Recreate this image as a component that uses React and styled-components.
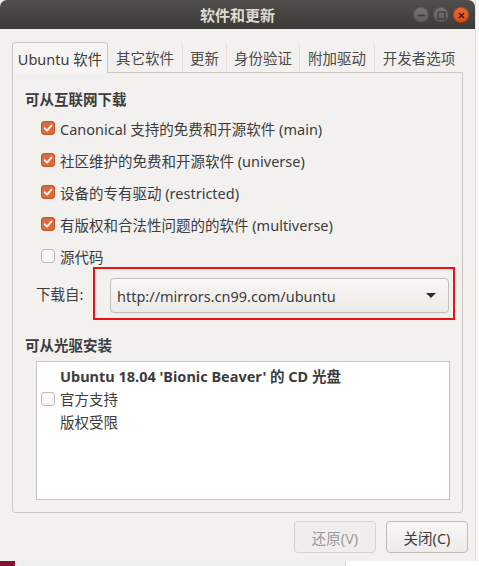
import React from 'react'
import styled, { createGlobalStyle } from 'styled-components'

const GlobalStyle = createGlobalStyle`
  html, body { margin: 0; padding: 0; }
  body {
    width: 479px;
    height: 566px;
    overflow: hidden;
    background: #f4f4f4;
    font-family: "Noto Sans", "Noto Sans CJK SC", sans-serif;
  }
`

const FONT = `"Noto Sans", "Noto Sans CJK SC", sans-serif`

const Screen = styled.div`
  width: 479px;
  height: 566px;
  display: flex;
  flex-direction: column;
`

const TopRow = styled.div`
  display: flex;
  height: 561px;
`

const Window = styled.div`
  width: 475px;
  display: flex;
  flex-direction: column;
  background: #f2f1f0;
  border-radius: 7px 7px 0 0;
  overflow: hidden;
  box-shadow: 0 1px 3px rgba(0,0,0,0.25);
`

const RightStrip = styled.div`
  flex: 1;
  background: #f7f7f7;
  border-left: 1px solid #e2e0de;
`

const BottomStrip = styled.div`
  height: 5px;
  display: flex;
`

const Seg = styled.div`
  width: ${p => p.w}px;
  flex: ${p => (p.w ? 'none' : 1)};
  background: ${p => p.bg};
  border-left: ${p => (p.line ? '1px solid #d8d6d4' : 'none')};
`

const TitleBar = styled.div`
  height: 29px;
  flex: none;
  display: flex;
  align-items: center;
  justify-content: center;
  position: relative;
  background: linear-gradient(#504e4a, #3c3b37);
  color: #dfdbd2;
  font-family: ${FONT};
  font-size: 15px;
  font-weight: 600;
`

const Controls = styled.div`
  position: absolute;
  right: 6px;
  top: 7px;
  display: flex;
  gap: 4px;
`

const Ctl = styled.div`
  width: 16px;
  height: 16px;
  border-radius: 50%;
  background: ${p => (p.close ? 'linear-gradient(#f0683a, #d94a1c)' : 'linear-gradient(#7a7873, #5b5955)')};
  display: flex;
  align-items: center;
  justify-content: center;
  box-shadow: inset 0 0 0 1px rgba(0,0,0,0.25);
`

const Body = styled.div`
  flex: 1;
  display: flex;
  flex-direction: column;
  padding: 13px 7px 8px 12px;
  font-family: ${FONT};
  font-size: 14.5px;
  color: #3c3c3c;
`

const Tabs = styled.div`
  display: flex;
  height: 30px;
  margin-right: 5px;
`

const Tab = styled.div`
  box-sizing: border-box;
  width: ${p => p.w}px;
  flex: none;
  display: flex;
  align-items: center;
  justify-content: center;
  white-space: nowrap;
  color: ${p => (p.active ? '#3c3c3c' : '#4a4a4a')};
  background: ${p => (p.active ? '#f6f5f4' : 'transparent')};
  border: ${p => (p.active ? '1px solid #cdc7c2' : 'none')};
  border-bottom: none;
  border-radius: 4px 4px 0 0;
  margin-bottom: ${p => (p.active ? '-1px' : '0')};
  height: ${p => (p.active ? '31px' : '30px')};
  z-index: ${p => (p.active ? 1 : 0)};
  border-right: ${p => (p.active ? '1px solid #cdc7c2' : p.last ? 'none' : '1px solid #e2dfdc')};
  padding-top: 1px;
`

const Frame = styled.div`
  box-sizing: border-box;
  height: 441px;
  margin-right: 5px;
  border: 1px solid #cdc7c2;
  border-radius: 0 0 3px 3px;
  background: #f2f1f0;
  display: flex;
  flex-direction: column;
  padding: 16px 12px 12px 12px;
`

const Heading = styled.div`
  font-weight: 700;
  height: 20px;
  line-height: 20px;
  color: #3c3c3c;
`

const CheckList = styled.div`
  display: flex;
  flex-direction: column;
  margin-top: 3px;
  padding-left: 16px;
`

const CheckRow = styled.div`
  display: flex;
  align-items: center;
  gap: 5px;
  height: 32px;
`

const Box = styled.div`
  box-sizing: border-box;
  width: 14px;
  height: 14px;
  border-radius: 3px;
  flex: none;
  display: flex;
  align-items: center;
  justify-content: center;
  background: ${p => (p.checked ? '#dd6a3a' : '#f8f7f6')};
  border: 1px solid ${p => (p.checked ? '#c2552a' : '#bdb8b3')};
`

const SourceRow = styled.div`
  display: flex;
  align-items: center;
  margin-top: -5px;
  padding-left: 11px;
  margin-right: -5px;
`

const Label = styled.div`
  width: 57px;
  color: #3c3c3c;
`

const RedBox = styled.div`
  flex: 1;
  height: 53px;
  box-sizing: border-box;
  border: 2px solid #ee1111;
  padding: 9px 4px 5px 15px;
`

const Combo = styled.div`
  box-sizing: border-box;
  height: 35px;
  border: 1px solid #c4bfba;
  border-radius: 4px;
  background: linear-gradient(#f7f6f5, #edebe9);
  display: flex;
  align-items: center;
  justify-content: space-between;
  padding: 0 12px 0 6px;
  color: #3c3c3c;
  box-shadow: 0 1px 0 rgba(0,0,0,0.05);
`

const Arrow = styled.div`
  width: 0;
  height: 0;
  border-left: 5px solid transparent;
  border-right: 5px solid transparent;
  border-top: 5px solid #2e2e2e;
`

const Heading2 = styled(Heading)`
  margin-top: 15px;
`

const ListBox = styled.div`
  margin: 6px 0 0 11px;
  flex: 1;
  background: #ffffff;
  border: 1px solid #c9c4bf;
  display: flex;
  align-items: flex-start;
  padding: 3px 0 0 4px;
`

const ListCheck = styled.div`
  padding-top: 27px;
`

const ListText = styled.div`
  display: flex;
  flex-direction: column;
  margin-left: 5px;
  line-height: 23px;
`

const Bold = styled.div`
  font-weight: 700;
`

const Buttons = styled.div`
  display: flex;
  justify-content: flex-end;
  gap: 10px;
  margin-top: 8px;
`

const Button = styled.div`
  box-sizing: border-box;
  width: 82px;
  height: 32px;
  border-radius: 4px;
  border: 1px solid ${p => (p.disabled ? '#d6d2ce' : '#bfbab5')};
  background: ${p => (p.disabled ? '#efeeed' : 'linear-gradient(#f8f7f6, #edebe9)')};
  color: ${p => (p.disabled ? '#9b9a99' : '#3c3c3c')};
  display: flex;
  align-items: center;
  justify-content: center;
`

function Check({ checked }) {
  return (
    <Box checked={checked}>
      {checked && (
        <svg width="10" height="10" viewBox="0 0 10 10">
          <path d="M1.5 5.2 L4 7.6 L8.6 2.4" stroke="#fff" strokeWidth="1.8" fill="none" strokeLinecap="round" strokeLinejoin="round" />
        </svg>
      )}
    </Box>
  )
}

const sources = [
  { text: 'Canonical 支持的免费和开源软件 (main)', checked: true },
  { text: '社区维护的免费和开源软件 (universe)', checked: true },
  { text: '设备的专有驱动 (restricted)', checked: true },
  { text: '有版权和合法性问题的的软件 (multiverse)', checked: true },
  { text: '源代码', checked: false },
]

const tabs = [
  { t: 'Ubuntu 软件', w: 96 },
  { t: '其它软件', w: 75 },
  { t: '更新', w: 44 },
  { t: '身份验证', w: 73 },
  { t: '附加驱动', w: 75 },
  { t: '开发者选项', w: 88 },
]

export default function App() {
  return (
    <Screen>
      <GlobalStyle />
      <TopRow>
        <Window>
          <TitleBar>
            软件和更新
            <Controls>
              <Ctl>
                <svg width="9" height="9" viewBox="0 0 9 9"><path d="M1 4.5 H8" stroke="#3a3936" strokeWidth="1.3" /></svg>
              </Ctl>
              <Ctl>
                <svg width="9" height="9" viewBox="0 0 9 9"><rect x="1" y="1" width="7" height="7" stroke="#3a3936" strokeWidth="1.2" fill="none" /></svg>
              </Ctl>
              <Ctl close>
                <svg width="9" height="9" viewBox="0 0 9 9"><path d="M2 2 L7 7 M7 2 L2 7" stroke="#3a1a10" strokeWidth="1.3" /></svg>
              </Ctl>
            </Controls>
          </TitleBar>
          <Body>
            <Tabs>
              {tabs.map((t, i) => (
                <Tab key={t.t} w={t.w} active={i === 0} last={i === tabs.length - 1}>{t.t}</Tab>
              ))}
            </Tabs>
            <Frame>
              <Heading>可从互联网下载</Heading>
              <CheckList>
                {sources.map(s => (
                  <CheckRow key={s.text}>
                    <Check checked={s.checked} />
                    <span>{s.text}</span>
                  </CheckRow>
                ))}
              </CheckList>
              <SourceRow>
                <Label>下载自:</Label>
                <RedBox>
                  <Combo>
                    <span>http://mirrors.cn99.com/ubuntu</span>
                    <Arrow />
                  </Combo>
                </RedBox>
              </SourceRow>
              <Heading2>可从光驱安装</Heading2>
              <ListBox>
                <ListCheck>
                  <Check />
                </ListCheck>
                <ListText>
                  <Bold>Ubuntu 18.04 'Bionic Beaver' 的 CD 光盘</Bold>
                  <span>官方支持</span>
                  <span>版权受限</span>
                </ListText>
              </ListBox>
            </Frame>
            <Buttons>
              <Button disabled>还原(V)</Button>
              <Button>关闭(C)</Button>
            </Buttons>
          </Body>
        </Window>
        <RightStrip />
      </TopRow>
      <BottomStrip>
        <Seg w={15} bg="#7a1530" />
        <Seg w={330} bg="#efefef" />
        <Seg bg="#ffffff" line />
      </BottomStrip>
    </Screen>
  )
}
